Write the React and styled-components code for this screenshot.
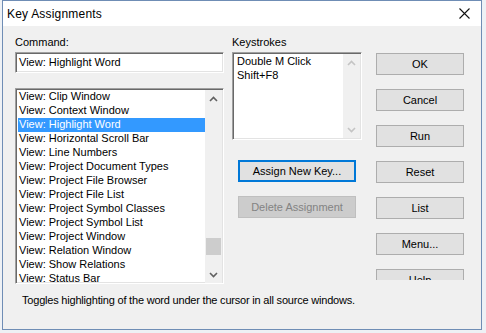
import React from 'react';
import styled, { createGlobalStyle } from 'styled-components';

const GlobalStyle = createGlobalStyle`
  html, body {
    margin: 0;
    padding: 0;
    background: #e4eaf1;
  }
  body {
    font-family: "Liberation Sans", Arial, sans-serif;
    font-size: 11px;
    color: #000;
  }
`;

const commands = [
	'View: Clip Window',
	'View: Context Window',
	'View: Highlight Word',
	'View: Horizontal Scroll Bar',
	'View: Line Numbers',
	'View: Project Document Types',
	'View: Project File Browser',
	'View: Project File List',
	'View: Project Symbol Classes',
	'View: Project Symbol List',
	'View: Project Window',
	'View: Relation Window',
	'View: Show Relations',
	'View: Status Bar',
];

const keystrokes = ['Double M Click', 'Shift+F8'];

const sideButtons = ['OK', 'Cancel', 'Run', 'Reset', 'List', 'Menu...', 'Help'];

const Chevron = ({ up, disabled }) => (
	<svg width="9" height="6" viewBox="0 0 9 6">
		<polyline
			points={up ? '1,5 4.5,1.5 8,5' : '1,1 4.5,4.5 8,1'}
			fill="none"
			stroke={disabled ? '#c4c4c4' : '#606060'}
			strokeWidth="1.6"
		/>
	</svg>
);

const ScrollBar = ({ thumbTop, disabled }) => (
	<Bar>
		<Arrow><Chevron up disabled={disabled} /></Arrow>
		<Track>
			{!disabled && <Thumb style={{ marginTop: thumbTop }} />}
		</Track>
		<Arrow><Chevron disabled={disabled} /></Arrow>
	</Bar>
);

const App = () => {
	const selected = 'View: Highlight Word';
	return (
		<Desktop>
			<GlobalStyle />
			<Window>
				<TitleBar>
					<Title>Key Assignments</Title>
					<Close>
						<svg width="11" height="11" viewBox="0 0 11 11">
							<path d="M0.5 0.5 L10.5 10.5 M10.5 0.5 L0.5 10.5" stroke="#111" strokeWidth="1.1" />
						</svg>
					</Close>
				</TitleBar>
				<Client>
					<Main>
						<LeftColumn>
							<Label>Command:</Label>
							<TextBox>{selected}</TextBox>
							<ListBox>
								<Items>
									{commands.map(cmd => (
										<Item key={cmd} selected={cmd === selected}>{cmd}</Item>
									))}
								</Items>
								<ScrollBar thumbTop={131} />
							</ListBox>
						</LeftColumn>
						<MiddleColumn>
							<Label>Keystrokes</Label>
							<KeyBox>
								<Items>
									{keystrokes.map(k => <KeyItem key={k}>{k}</KeyItem>)}
								</Items>
								<ScrollBar disabled />
							</KeyBox>
							<Button focused wide top={20}>Assign New Key...</Button>
							<Button disabled wide top={14}>Delete Assignment</Button>
						</MiddleColumn>
						<RightColumn>
							{sideButtons.map(b => <Button key={b}>{b}</Button>)}
						</RightColumn>
					</Main>
					<Status>Toggles highlighting of the word under the cursor in all source windows.</Status>
				</Client>
			</Window>
		</Desktop>
	);
};

const Desktop = styled.div`
	width: 486px;
	height: 333px;
	overflow: hidden;
	background: #eef1f5;
`;

const Window = styled.div`
	width: 480px;
	height: 330px;
	margin-left: 2px;
	box-sizing: border-box;
	border: 1px solid #6f8db5;
	display: flex;
	flex-direction: column;
	background: #f0f0f0;
`;

const TitleBar = styled.div`
	height: 25px;
	flex: none;
	background: #fff;
	display: flex;
	align-items: center;
	justify-content: space-between;
	padding: 0 8px 0 4px;
`;

const Title = styled.span`
	font-size: 12px;
	letter-spacing: 0.2px;
	color: #000;
`;

const Close = styled.span`
	display: flex;
	width: 14px;
	justify-content: center;
	margin-right: 2px;
`;

const Client = styled.div`
	flex: 1;
	display: flex;
	flex-direction: column;
`;

const Main = styled.div`
	height: 254px;
	flex: none;
	display: flex;
	padding-left: 12px;
	box-sizing: border-box;
`;

const LeftColumn = styled.div`
	width: 209px;
	display: flex;
	flex-direction: column;
	padding-top: 9px;
	position: relative;
	z-index: 1;
`;

const MiddleColumn = styled.div`
	width: 130px;
	margin-left: 8px;
	display: flex;
	flex-direction: column;
	padding-top: 9px;
`;

const RightColumn = styled.div`
	width: 88px;
	margin-left: 14px;
	padding-top: 27px;
	display: flex;
	flex-direction: column;
	gap: 14px;
	overflow: hidden;
	box-sizing: border-box;
	height: 100%;
`;

const Label = styled.div`
	height: 14px;
	flex: none;
	line-height: 14px;
	margin-bottom: 3px;
`;

const sunken = `
	box-sizing: border-box;
	flex: none;
	background: #fff;
	border-top: 1px solid #a0a0a0;
	border-left: 1px solid #a0a0a0;
	border-bottom: 1px solid #fff;
	border-right: 1px solid #fff;
	box-shadow: inset 1px 1px 0 #696969, inset -1px -1px 0 #e3e3e3;
`;

const TextBox = styled.div`
	${sunken}
	height: 21px;
	line-height: 19px;
	padding-left: 3px;
	white-space: nowrap;
`;

const ListBox = styled.div`
	${sunken}
	margin-top: 15px;
	height: 196px;
	padding: 1px 1px 0 1px;
	display: flex;
	overflow: hidden;
`;

const KeyBox = styled.div`
	${sunken}
	height: 88px;
	padding: 1px;
	display: flex;
	overflow: hidden;
`;

const Items = styled.div`
	flex: 1;
	overflow: hidden;
	padding-left: 1px;
`;

const Item = styled.div`
	height: 14px;
	line-height: 13px;
	padding-left: 1px;
	white-space: nowrap;
	background: ${p => (p.selected ? '#3399ff' : 'transparent')};
	color: ${p => (p.selected ? '#fff' : '#000')};
`;

const KeyItem = styled.div`
	height: 14px;
	line-height: 14px;
	padding-left: 2px;
	white-space: nowrap;
`;

const Bar = styled.div`
	width: 17px;
	flex: none;
	background: #f0f0f0;
	display: flex;
	flex-direction: column;
`;

const Arrow = styled.div`
	height: 17px;
	flex: none;
	display: flex;
	align-items: center;
	justify-content: center;
`;

const Track = styled.div`
	flex: 1;
	display: flex;
	flex-direction: column;
	align-items: center;
`;

const Thumb = styled.div`
	width: 15px;
	height: 17px;
	flex: none;
	background: #cdcdcd;
`;

const Button = styled.div`
	box-sizing: border-box;
	height: 22px;
	flex: none;
	width: ${p => (p.wide ? '118px' : '88px')};
	margin-left: ${p => (p.wide ? '6px' : '0')};
	margin-top: ${p => (p.top ? `${p.top}px` : '0')};
	display: flex;
	align-items: center;
	justify-content: center;
	white-space: nowrap;
	background: ${p => (p.disabled ? '#cccccc' : '#e1e1e1')};
	color: ${p => (p.disabled ? '#838383' : '#000')};
	border: 1px solid ${p => (p.focused ? '#0078d7' : p.disabled ? '#bfbfbf' : '#adadad')};
	box-shadow: ${p => (p.focused ? 'inset 0 0 0 1px #0078d7' : 'none')};
`;

const Status = styled.div`
	padding: 13px 0 0 19px;
	line-height: 14px;
	letter-spacing: -0.2px;
	white-space: nowrap;
`;

export default App;
